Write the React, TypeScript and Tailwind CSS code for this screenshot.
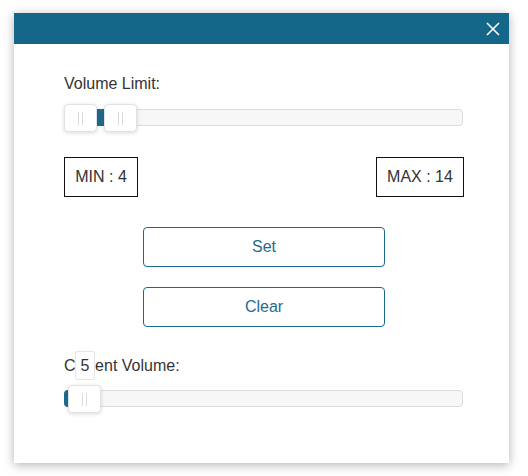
import React from "react";

function Handle({ left, top }: { left: number; top: number }) {
  return (
    <div
      className="absolute w-[33px] h-[28px] bg-white border border-[#e2e2e2] rounded-[4px] shadow-[0_1px_4px_rgba(0,0,0,0.15)] flex items-center justify-center gap-[3px]"
      style={{ left, top }}
    >
      <span className="w-px h-[13px] bg-[#dcdcdc]" />
      <span className="w-px h-[13px] bg-[#dcdcdc]" />
    </div>
  );
}

export default function App() {
  return (
    <div className="w-[528px] h-[476px] bg-white pt-[13px] pl-[14px] font-['Liberation_Sans',Arial,sans-serif] text-[#333]">
      <div className="w-[495px] h-[450px] bg-white shadow-[0_2px_10px_rgba(0,0,0,0.3)] flex flex-col">
        <div className="h-[31px] bg-[#15678a] flex items-center justify-end pr-[9px]">
          <svg width="14" height="14" viewBox="0 0 14 14" className="block">
            <path d="M1 1 L13 13 M13 1 L1 13" stroke="white" strokeWidth="1.6" fill="none" />
          </svg>
        </div>
        <div className="pl-[50px] flex flex-col w-[450px]">
          <div className="mt-[31px] text-[16px] leading-[18px] h-[18px]">Volume Limit:</div>
          <div className="relative mt-[11px] h-[28px] w-[400px]">
            <div className="absolute left-0 right-[1px] top-[5px] h-[17px] bg-[#f7f7f7] border border-[#dcdcdc] rounded-[4px]" />
            <div className="absolute left-[33px] w-[8px] top-[5px] h-[17px] bg-[#1d6c8e]" />
            <Handle left={0} top={0} />
            <Handle left={40} top={0} />
          </div>
          <div className="mt-[25px] flex justify-between w-[400px]">
            <div className="h-[40px] w-[74px] border border-[#111] flex items-center justify-center text-[16px]">MIN : 4</div>
            <div className="h-[40px] w-[88px] border border-[#111] flex items-center justify-center text-[16px]">MAX : 14</div>
          </div>
          <div className="mt-[30px] ml-[79px] w-[242px] h-[40px] border border-[#1b6a8c] rounded-[4px] flex items-center justify-center text-[16px] text-[#1f6b8d]">Set</div>
          <div className="mt-[20px] ml-[79px] w-[242px] h-[40px] border border-[#1b6a8c] rounded-[4px] flex items-center justify-center text-[16px] text-[#1f6b8d]">Clear</div>
          <div className="relative mt-[30px] text-[16px] leading-[18px] h-[18px]">
            Current Volume:
            <div className="absolute left-[11px] top-[-6px] w-[20px] h-[29px] bg-white border border-[#e6e6e6] rounded-[2px] flex items-center justify-center">5</div>
          </div>
          <div className="relative mt-[10px] h-[28px] w-[400px]">
            <div className="absolute left-0 right-[1px] top-[5px] h-[17px] bg-[#f7f7f7] border border-[#dcdcdc] rounded-[4px]" />
            <div className="absolute left-0 w-[8px] top-[5px] h-[17px] bg-[#1d6c8e] rounded-l-[4px]" />
            <Handle left={4} top={0} />
          </div>
        </div>
      </div>
    </div>
  );
}
